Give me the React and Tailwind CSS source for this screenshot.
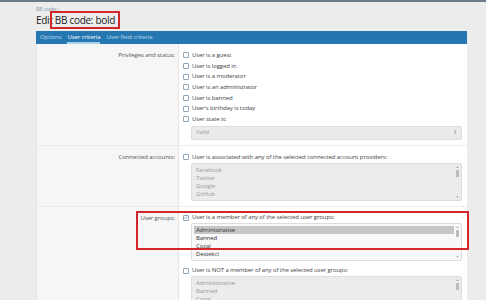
import React from "react";

const Box = ({ checked }) => (
    <span className="w-[6px] h-[6px] border border-[#8ea6bb] bg-white rounded-[1px] flex items-center justify-center shrink-0">
        {checked && (
            <svg viewBox="0 0 6 6" className="w-[5px] h-[5px]">
                <path d="M1 3 L2.5 4.5 L5 1.5" stroke="#2577b1" strokeWidth="1" fill="none" />
            </svg>
        )}
    </span>
);

const Check = ({ label, checked }) => (
    <div className="h-[10.7px] flex items-center gap-[3px] text-[#444]">
        <Box checked={checked} />
        <span>{label}</span>
    </div>
);

const ListBox = ({ items, active, selected }) => (
    <div
        className={`ml-[8px] h-[38px] border border-[#dcdcdc] rounded-[2px] flex overflow-hidden ${
            active ? "bg-[#f8f8f8] text-[#333]" : "bg-[#ececec] text-[#9a9a9a]"
        }`}
    >
        <div className="flex-1 pt-[2px] pl-[2px]">
            {items.map((it) => (
                <div
                    key={it}
                    className={`h-[8px] leading-[8px] pl-[2px] ${it === selected ? "bg-[#c6c6c6]" : ""}`}
                >
                    {it}
                </div>
            ))}
        </div>
        {/* scrollbar */}
        <div className="w-[7px] flex flex-col items-center text-[3px] text-[#888] leading-[4px] pt-[1px]">
            <span>▲</span>
            <span className="w-[3px] h-[7px] bg-[#bcbcbc] mt-[1px]"></span>
            <span className="mt-auto pb-[1px]">▼</span>
        </div>
    </div>
);

function App() {
    return (
        <div className="w-[486px] h-[300px] overflow-hidden bg-[#ececec] relative font-['Open_Sans',sans-serif] text-[6px] tracking-[-0.1px]">
            <div className="h-[2px] bg-[#6c7987]"></div>
            <div className="ml-[36px] w-[431px]">
                <div className="pt-[4px] h-[10px] text-[5px] text-[#8796a6] leading-[6px]">BB codes ›</div>
                <div className="h-[19px] text-[10px] leading-[14px] text-[#222] pt-[1px] tracking-[-0.3px]">Edit BB code: bold</div>

                {/* tabs */}
                <div className="h-[13px] bg-[#2577b1] flex items-stretch gap-[6px] pl-[4px] text-[#bcd8ee]">
                    <span className="flex items-center">Options</span>
                    <span className="flex items-center text-white border-b-2 border-[#a9d0ee] pt-[2px]">User criteria</span>
                    <span className="flex items-center">User field criteria</span>
                </div>

                {/* panel */}
                <div className="bg-white border-l border-[#e2e2e2] text-[#444]">
                    {/* privileges */}
                    <div className="flex border-b border-[#ececec]">
                        <div className="w-[142px] bg-[#f6f6f6] border-r border-[#e6e6e6] text-right pr-[3px] pt-[6px] text-[#555] leading-[10.7px]">
                            Privileges and status:
                        </div>
                        <div className="flex-1 pl-[4px] pr-[5px] pt-[6px] pb-[5px]">
                            <Check label="User is a guest" />
                            <Check label="User is logged in" />
                            <Check label="User is a moderator" />
                            <Check label="User is an administrator" />
                            <Check label="User is banned" />
                            <Check label="User's birthday is today" />
                            <Check label="User state is:" />
                            <div className="ml-[8px] mt-[1px] h-[14px] bg-[#ebebeb] border border-[#dcdcdc] rounded-[2px] flex items-center justify-between px-[4px] text-[#9c9c9c]">
                                <span>Valid</span>
                                <span className="text-[5px] text-[#888]">⇕</span>
                            </div>
                        </div>
                    </div>

                    {/* connected accounts */}
                    <div className="flex border-b border-[#ececec]">
                        <div className="w-[142px] bg-[#f6f6f6] border-r border-[#e6e6e6] text-right pr-[3px] pt-[6px] text-[#555] leading-[10px]">
                            Connected accounts:
                        </div>
                        <div className="flex-1 pl-[4px] pr-[5px] pt-[6px] pb-[5px]">
                            <Check label="User is associated with any of the selected connected account providers:" />
                            <ListBox items={["Facebook", "Twitter", "Google", "GitHub", "Linkedin"]} />
                        </div>
                    </div>

                    {/* user groups */}
                    <div className="flex h-[100px]">
                        <div className="w-[142px] bg-[#f6f6f6] border-r border-[#e6e6e6] text-right pr-[3px] pt-[6px] text-[#555] leading-[10px]">
                            User groups:
                        </div>
                        <div className="flex-1 pl-[4px] pr-[5px] pt-[6px]">
                            <Check checked label="User is a member of any of the selected user groups:" />
                            <ListBox active selected="Administrative" items={["Administrative", "Banned", "Cozal", "Destekci", "Moderator"]} />
                            <div className="mt-[4px]">
                                <Check label="User is NOT a member of any of the selected user groups:" />
                            </div>
                            <ListBox items={["Administrative", "Banned", "Cozal", "Destekci"]} />
                        </div>
                    </div>
                </div>
            </div>

            {/* annotation boxes */}
            <div className="absolute left-[50px] top-[11px] w-[70px] h-[18px] border-2 border-[#d3262b]"></div>
            <div className="absolute left-[136px] top-[211px] w-[333px] h-[39px] border-2 border-[#d3262b]"></div>
        </div>
    );
}

export default App;
